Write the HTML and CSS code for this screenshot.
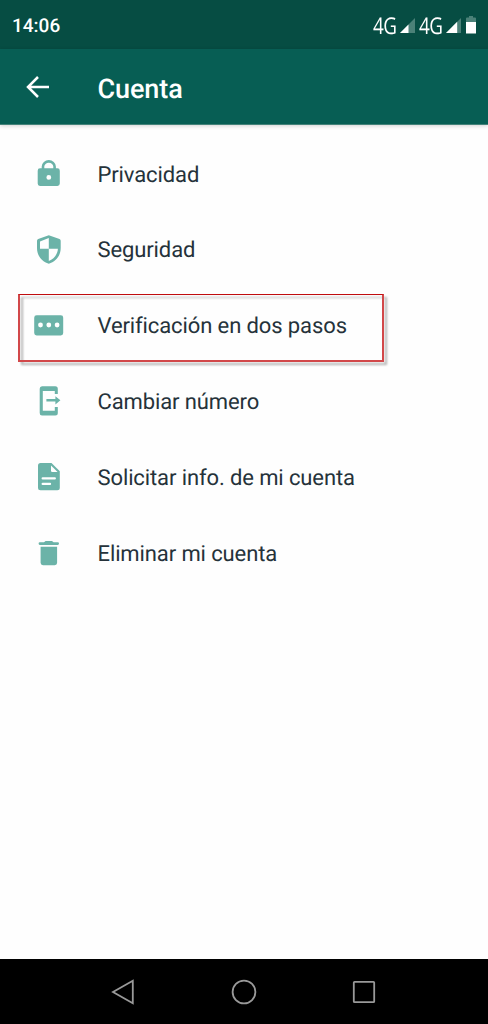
FILE: index.html
```html
<!DOCTYPE html>
<html lang="es">
<head>
<meta charset="utf-8">
<title>Cuenta</title>
<link rel="stylesheet" href="styles.css">
</head>
<body>
<div class="screen">
  <div class="status">
    <span class="time">14:06</span>
    <div class="indicators">
      <span class="net">4G</span>
      <svg class="signal" viewBox="0 0 15 15"><path class="dim" d="M15 0V15H0Z"/><path d="M8.5 6.5V15H0Z"/></svg>
      <span class="net second">4G</span>
      <svg class="signal" viewBox="0 0 15 15"><path class="dim" d="M15 0V15H0Z"/><path d="M11.2 3.8V15H0Z"/></svg>
      <svg class="battery" viewBox="0 0 10 18"><path class="dim" d="M0 2.5Q0 1.5 1 1.5H3V0H7V1.5H9Q10 1.5 10 2.5V6H0Z"/><path d="M0 6H10V17.5H0Z"/></svg>
    </div>
  </div>
  <header class="appbar">
    <svg class="back" viewBox="0 0 24 24"><path d="M23 12H2.5M12 2L2 12L12 22"/></svg>
    <h1>Cuenta</h1>
  </header>
  <main class="list">
    <div class="row">
      <svg class="icon" viewBox="0 0 32 32"><path class="line" d="M10 11V8.6a5.8 5.2 0 0 1 11.6 0V11" stroke-width="2.6"/><path fill-rule="evenodd" d="M7 10.3H24.4Q26.8 10.3 26.8 12.7V25.6Q26.8 28 24.4 28H7Q4.7 28 4.7 25.6V12.7Q4.7 10.3 7 10.3ZM15.8 17a2.4 2.4 0 1 0 0 4.8a2.4 2.4 0 1 0 0-4.8Z"/></svg>
      <span>Privacidad</span>
    </div>
    <div class="row">
      <svg class="icon" viewBox="0 0 32 32"><path fill-rule="evenodd" d="M15.8 1.2L26.5 5Q27.7 5.5 27.7 6.8V14C27.7 21.5 23 27.5 15.8 29.8C8.7 27.5 4 21.5 4 14V6.8Q4 5.5 5.2 5ZM15.8 4L7 7.4V14.8H15.8ZM15.8 14.8V26.9C21 25 24.7 20.2 24.9 14.8Z"/></svg>
      <span>Seguridad</span>
    </div>
    <div class="row">
      <svg class="icon" viewBox="0 0 32 32"><rect x="1.2" y="5.3" width="29" height="20.2" rx="2.4"/><g fill="#fff"><circle cx="7.5" cy="15" r="2.4"/><circle cx="15.8" cy="15" r="2.4"/><circle cx="24.1" cy="15" r="2.4"/></g></svg>
      <span>Verificación en dos pasos</span>
      <div class="highlight"></div>
    </div>
    <div class="row">
      <svg class="icon" viewBox="0 0 32 32"><path d="M9 1.2H22.3Q24.8 1.2 24.8 3.7V9H21.8V6.1H9.8V25.7H21.8V22H24.8V27.9Q24.8 30.4 22.3 30.4H9Q6.7 30.4 6.7 27.9V3.7Q6.7 1.2 9 1.2ZM13.4 14.1H22.4V11.2L27.4 15.3L22.4 19.4V16.5H13.4Z"/></svg>
      <span>Cambiar número</span>
    </div>
    <div class="row">
      <svg class="icon" viewBox="0 0 32 32"><path d="M7.5 2H18.5L26.8 10.2V26.7Q26.8 29.2 24.3 29.2H7.5Q5 29.2 5 26.7V4.5Q5 2 7.5 2Z"/><path fill="#fff" d="M18 4.4L24.6 11H19.2Q18 11 18 9.8Z"/><path d="M9.7 17.4H21.8M9.7 22.9H17" stroke="#fff" stroke-width="2.3" stroke-linecap="round"/></svg>
      <span>Solicitar info. de mi cuenta</span>
    </div>
    <div class="row">
      <svg class="icon" viewBox="0 0 32 32"><path d="M6.8 5.3H11L12.6 4.1H19L20.6 5.3H24.8Q26 5.3 26 6.6T24.8 7.9H6.8Q5.6 7.9 5.6 6.6T6.8 5.3ZM7.6 9.8H24.1V25.8Q24.1 28.2 21.7 28.2H10Q7.6 28.2 7.6 25.8Z"/></svg>
      <span>Eliminar mi cuenta</span>
    </div>
  </main>
  <nav class="navbar">
    <svg viewBox="0 0 26 26"><path d="M22.8 1.8V24.2L3 13Z"/></svg>
    <svg viewBox="0 0 26 26"><circle cx="13" cy="13" r="11.4"/></svg>
    <svg viewBox="0 0 26 26"><rect x="2.8" y="2.8" width="20.4" height="20.4" rx=".8"/></svg>
  </nav>
</div>
</body>
</html>
```
FILE: styles.css
```css
* { box-sizing: border-box; }
body { margin: 0; }
svg { display: block; flex: none; }

.screen {
  width: 488px;
  height: 1024px;
  display: flex;
  flex-direction: column;
  background: #fefefe;
  font-family: Roboto, "Liberation Sans", sans-serif;
  text-rendering: geometricPrecision;
  overflow: hidden;
}

.status {
  height: 49px;
  flex: none;
  padding: 1px 12px 0 12px;
  display: flex;
  align-items: center;
  justify-content: space-between;
  background: #064d43;
  color: #fff;
}
.time { font-size: 19px; font-weight: 500; }
.indicators { display: flex; align-items: center; fill: #fff; }
.net {
  width: 27.5px;
  font: 400 23px/24px "Open Sans", "Noto Sans", sans-serif;
  letter-spacing: -.8px;
  transform: scaleX(.82);
  transform-origin: left;
}
.second { margin-left: 3.5px; }
.signal { width: 15px; height: 15px; }
.battery { width: 10px; height: 18px; margin-left: 5px; }
.dim { fill: #4b8178; }

.appbar {
  position: relative;
  height: 76px;
  flex: none;
  padding: 0 0 0 26px;
  display: flex;
  align-items: center;
  background: #075e54;
  border-bottom: 1px solid #438279;
  box-shadow: 0 1px 4px rgba(0, 0, 0, .18);
  color: #fff;
}
.back {
  width: 24px;
  height: 24px;
  fill: none;
  stroke: #fff;
  stroke-width: 2.5;
}
.appbar h1 { margin: 0 0 0 47.5px; padding-top: 4px; font-size: 27px; font-weight: 500; letter-spacing: -.1px; }

.list { flex: 1; padding-top: 11px; }
.row {
  position: relative;
  height: 75.85px;
  padding-left: 33px;
  display: flex;
  align-items: center;
  font-size: 22px;
  letter-spacing: -.11px;
  color: #25323a;
}
.row span { margin-left: 32.5px; padding-top: 2.4px; white-space: nowrap; }
.icon { width: 32px; height: 32px; fill: #6bb3a8; }
.line { fill: none; stroke: #6bb3a8; }

.highlight {
  position: absolute;
  left: 18px;
  top: 6.3px;
  width: 366px;
  height: 68px;
  border: 2px solid #d2484a;
  border-top: 1px solid #c00c0e;
  filter: drop-shadow(3px 3px 1px rgba(0, 0, 0, .3));
}

.navbar {
  height: 65px;
  flex: none;
  padding: 0 111px 0 110px;
  display: flex;
  align-items: center;
  justify-content: space-between;
  background: #000;
}
.navbar svg {
  width: 26px;
  height: 26px;
  fill: none;
  stroke: #999;
  stroke-width: 1.8;
}
```
